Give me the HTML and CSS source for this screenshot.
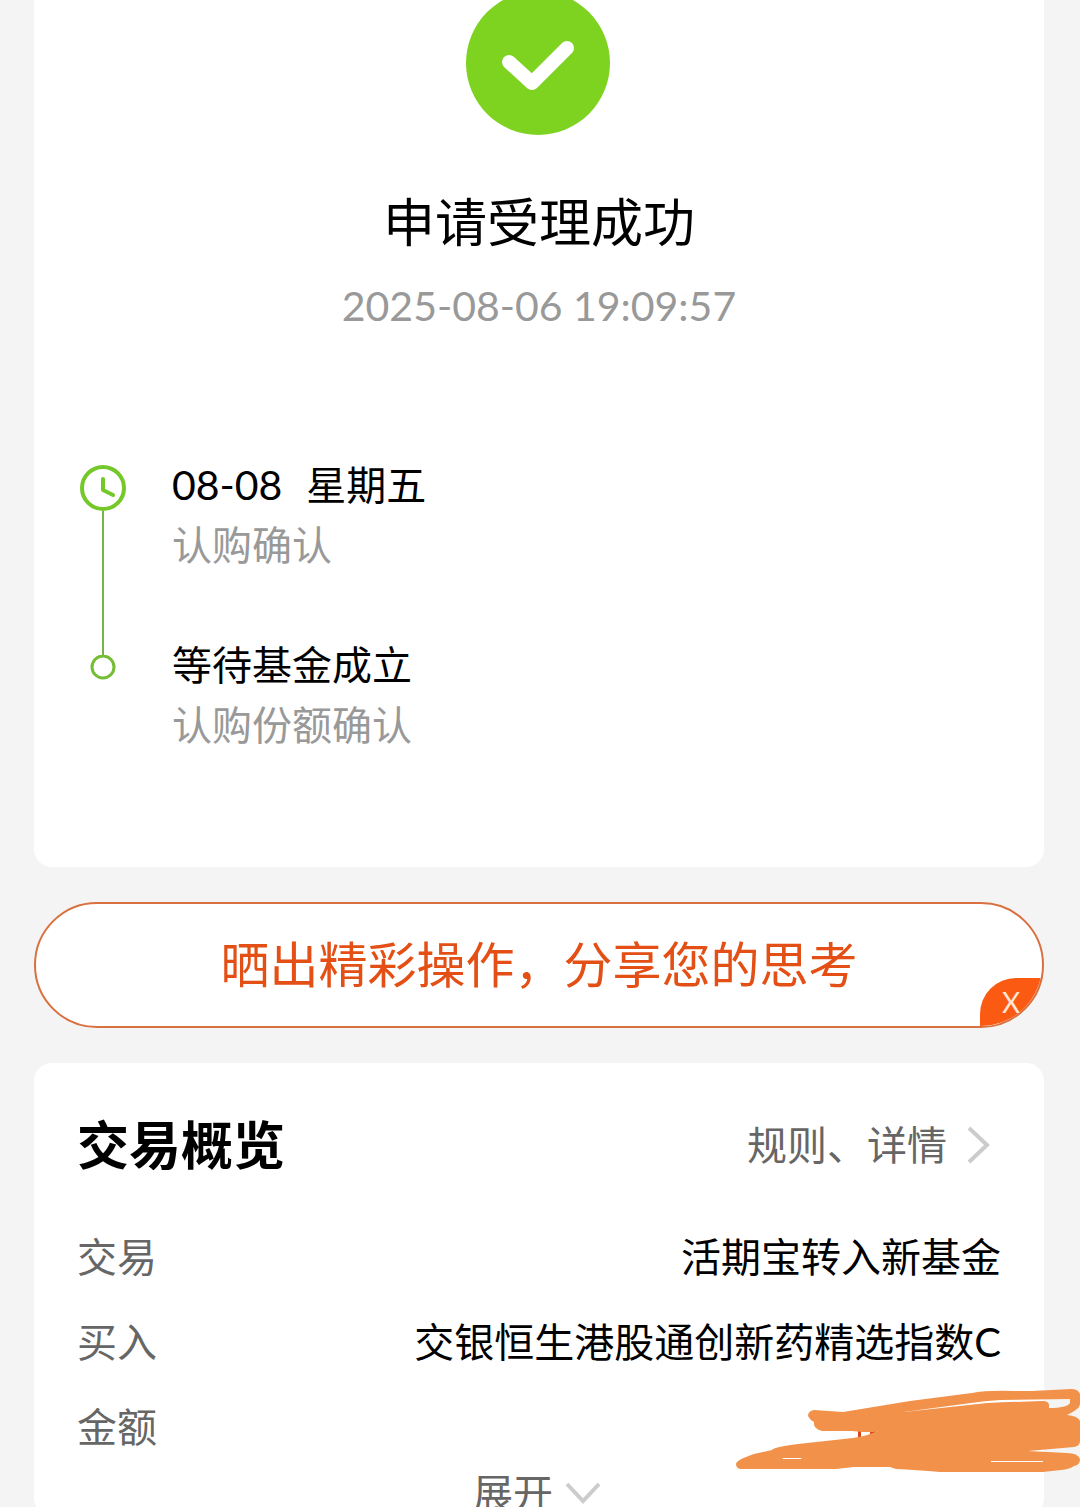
FILE: index.html
```html
<!DOCTYPE html>
<html lang="zh-CN">

<head>
    <meta charset="UTF-8">
    <meta name="viewport" content="width=device-width, initial-scale=1.0">
    <title>申请受理成功</title>
    <link rel="stylesheet" href="styles.css">
</head>

<body>
    <div class="container">
        <!-- 受理结果 -->
        <div class="card result">
            <svg class="result-icon" width="144" height="135" viewBox="0 9 144 135">
                <circle cx="71" cy="72" r="72" fill="#7ed321" />
                <path d="M42 71l23 21 35-35" fill="none" stroke="#fff" stroke-width="14" stroke-linecap="round" stroke-linejoin="round" />
            </svg>
            <h1>申请受理成功</h1>
            <p class="time">2025-08-06 19:09:57</p>

            <!-- 进度 -->
            <ol class="steps">
                <li>
                    <div class="rail">
                        <svg width="46" height="46" viewBox="0 0 46 46" fill="none" stroke="#74c82a" stroke-width="4" stroke-linecap="round" stroke-linejoin="round">
                            <circle cx="23" cy="23" r="21" />
                            <path d="M23 14v11l10 5" />
                        </svg>
                        <i class="line"></i>
                    </div>
                    <div class="step-text">
                        <p class="step-name"><span class="date">08-08</span><span class="week">星期五</span></p>
                        <p class="step-desc">认购确认</p>
                    </div>
                </li>
                <li>
                    <div class="rail">
                        <i class="line"></i>
                        <svg width="26" height="26" viewBox="0 0 26 26" fill="none" stroke="#74bd35" stroke-width="3">
                            <circle cx="13" cy="12" r="11" />
                        </svg>
                    </div>
                    <div class="step-text">
                        <p class="step-name">等待基金成立</p>
                        <p class="step-desc">认购份额确认</p>
                    </div>
                </li>
            </ol>
        </div>

        <!-- 分享 -->
        <div class="share">
            <button class="share-btn" type="button">晒出精彩操作，分享您的思考</button>
            <button class="share-close" type="button" aria-label="关闭">X</button>
        </div>

        <!-- 交易概览 -->
        <div class="card overview">
            <div class="overview-head">
                <h2>交易概览</h2>
                <a href="#">规则、详情
                    <svg width="24" height="38" viewBox="0 0 24 38" fill="none" stroke="#ccc" stroke-width="4">
                        <path d="M2 2l18 17L2 36" />
                    </svg>
                </a>
            </div>
            <dl>
                <div class="row">
                    <dt>交易</dt>
                    <dd>活期宝转入新基金</dd>
                </div>
                <div class="row">
                    <dt>买入</dt>
                    <dd>交银恒生港股通创新药精选指数C</dd>
                </div>
                <div class="row">
                    <dt>金额</dt>
                    <dd>
                        <!-- 金额涂抹 -->
                        <svg class="smear" width="344" height="86" viewBox="0 0 344 86">
                            <path d="M122 43h3v8h-3zM134 43h6v3h-6z" fill="#d9481c" />
                            <path fill="#f2914a" fill-rule="evenodd" d="M78 22Q72 23 72 28Q74 32 78 34Q77 41 86 43H116L126 44H138L141 43Q132 48 117 50L62 56Q38 59 36 62L18 66Q0 72 0 76Q0 80 4 81H100L118 79H154L160 81Q180 82 204 84H307L325 82Q334 81 338 78Q344 77 344 71Q342 65 331 65L292 63L338 59Q344 58 344 53V33Q342 28 331 27Q344 21 344 16V6Q342 1 335 1L296 3H280Q250 2 236 5L174 13L107 24Z
                                M168 24L235 15Q248 13 264 12L334 11V15Q331 20 313 20V17Q313 13 306 13Q276 14 251 15Z
                                M47 70H65L66 71H46ZM255 73H307V74H255Z" />
                        </svg>
                    </dd>
                </div>
            </dl>
            <button class="expand" type="button">展开
                <svg width="36" height="22" viewBox="0 0 36 22" fill="none" stroke="#ccc" stroke-width="4">
                    <path d="M2 2l16 17L34 2" />
                </svg>
            </button>
        </div>
    </div>
</body>

</html>
```

FILE: styles.css
```css
* {
    margin: 0;
    padding: 0;
    box-sizing: border-box;
}

body {
    height: 100vh;
    overflow: hidden;
    background: #f4f4f4;
    color: #000;
    font-family: Lato, "Noto Sans CJK SC", sans-serif;
    font-size: 40px;
}

svg {
    display: block;
    flex-shrink: 0;
}

button {
    border: 0;
    background: none;
    font-family: inherit;
    cursor: pointer;
}

.container {
    display: flex;
    flex-direction: column;
    gap: 35px;
    padding: 0 36px 0 34px;
}

.card {
    background: #fff;
    border-radius: 18px;
}

/* 受理结果 */
.result {
    padding: 0 46px 112px;
    border-radius: 0 0 18px 18px;
    text-align: center;
}

.result-icon {
    margin: 0 auto;
    overflow: visible;
}

.result h1 {
    margin-top: 51px;
    font-size: 52px;
    font-weight: normal;
    line-height: 72px;
}

.time {
    margin-top: 18px;
    color: #999;
    font-size: 41px;
    line-height: 60px;
}

/* 进度 */
.steps {
    margin-top: 119px;
    list-style: none;
    text-align: left;
}

.steps li {
    display: flex;
    gap: 46px;
    line-height: 60px;
}

.steps li:first-child .step-text {
    padding-bottom: 60px;
}

.rail {
    display: flex;
    flex-direction: column;
    align-items: center;
    width: 46px;
}

.steps li:first-child .rail {
    padding-top: 10px;
}

.line {
    flex: 1;
    width: 2px;
    background: #78b347;
}

.steps li:last-child .line {
    flex: none;
    height: 20px;
}

.date {
    font-size: 41px;
}

.week {
    margin-left: 24px;
}

.step-desc {
    color: #999;
}

/* 分享 */
.share {
    position: relative;
    height: 126px;
    overflow: hidden;
    background: #fff;
    border: 2px solid #d9703f;
    border-radius: 63px;
}

.share-btn {
    display: block;
    width: 100%;
    height: 100%;
    padding-bottom: 8px;
    color: #e34f14;
    font-size: 49px;
}

.share-close {
    position: absolute;
    right: 0;
    bottom: 0;
    width: 62px;
    height: 48px;
    background: #fb5a12;
    border-radius: 36px 0 0 0;
    color: #ffe6d5;
    font-size: 28px;
}

/* 交易概览 */
.overview {
    padding: 42px 43px 0;
}

.overview-head {
    display: flex;
    justify-content: space-between;
    align-items: center;
    margin-bottom: 30px;
    line-height: 80px;
}

.overview-head h2 {
    font-size: 52px;
    font-weight: bold;
}

.overview-head a {
    display: flex;
    align-items: center;
    gap: 20px;
    margin-right: 10px;
    color: #666;
    text-decoration: none;
}

.row {
    display: flex;
    justify-content: space-between;
    position: relative;
    line-height: 85px;
}

.row dt {
    color: #666;
}

.smear {
    position: absolute;
    top: 3px;
    right: -79px;
}

.expand {
    display: flex;
    justify-content: center;
    align-items: center;
    gap: 12px;
    width: 100%;
    height: 46px;
    padding-right: 4px;
    color: #666;
    font-size: 40px;
    line-height: 46px;
}
```
